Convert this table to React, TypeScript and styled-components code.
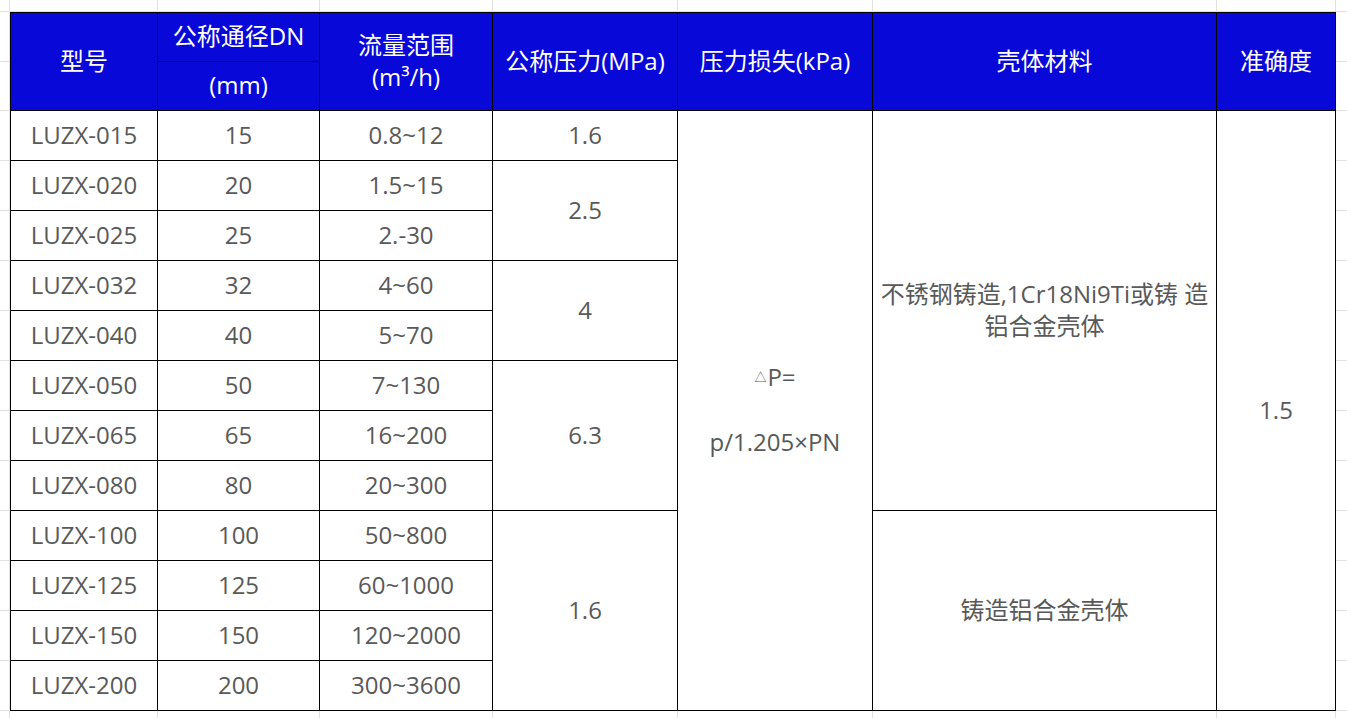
import React from "react";
import styled, { createGlobalStyle, css } from "styled-components";

const GlobalStyle = createGlobalStyle`
  html, body { margin: 0; padding: 0; background: #ffffff; overflow: hidden; }
  * { box-sizing: border-box; }
`;

const LINE = "#000000";
const GRID = "#e1e1e1";
const HEAD_BG = "#0808d8";
const TEXT = "#595959";

const Sheet = styled.div`
  display: grid;
  width: 1347px;
  height: 718px;
  grid-template-columns: 10px 148px 162px 173px 185px 195px 344px 119px 1fr;
  grid-template-rows: 12px 50px 49px repeat(12, 50px) 1fr;
  font-family: "Open Sans", "Noto Sans CJK SC", sans-serif;
`;

const GridCell = styled.div<{ $c: number; $r: number; $right?: boolean; $bottom?: boolean }>`
  grid-column: ${(p) => p.$c};
  grid-row: ${(p) => p.$r};
  border-right: ${(p) => (p.$right ? `1px solid ${GRID}` : "none")};
  border-bottom: ${(p) => (p.$bottom ? `1px solid ${GRID}` : "none")};
`;

const Cell = styled.div<{
  $c: number;
  $r: number;
  $cs?: number;
  $rs?: number;
  $head?: boolean;
  $left?: boolean;
  $top?: boolean;
}>`
  grid-column: ${(p) => p.$c} / span ${(p) => p.$cs ?? 1};
  grid-row: ${(p) => p.$r} / span ${(p) => p.$rs ?? 1};
  display: flex;
  align-items: center;
  justify-content: center;
  text-align: center;
  padding-bottom: 2px;
  border-right: 1px solid ${LINE};
  border-bottom: 1px solid ${LINE};
  ${(p) => p.$left && css`border-left: 1px solid ${LINE};`}
  ${(p) => p.$top && css`border-top: 1px solid ${LINE};`}
  background: ${(p) => (p.$head ? HEAD_BG : "#ffffff")};
  color: ${(p) => (p.$head ? "#ffffff" : TEXT)};
  font-size: 24px;
  line-height: 32px;
  white-space: nowrap;
`;

const Lines = styled.div`
  display: flex;
  flex-direction: column;
  align-items: center;
  line-height: 32px;
`;

const Blank = styled.div`
  height: 32px;
`;

const Tri = styled.span`
  font-size: 12px;
  vertical-align: 4px;
  margin-right: 1px;
`;

const rows: [string, string, string][] = [
  ["LUZX-015", "15", "0.8~12"],
  ["LUZX-020", "20", "1.5~15"],
  ["LUZX-025", "25", "2.-30"],
  ["LUZX-032", "32", "4~60"],
  ["LUZX-040", "40", "5~70"],
  ["LUZX-050", "50", "7~130"],
  ["LUZX-065", "65", "16~200"],
  ["LUZX-080", "80", "20~300"],
  ["LUZX-100", "100", "50~800"],
  ["LUZX-125", "125", "60~1000"],
  ["LUZX-150", "150", "120~2000"],
  ["LUZX-200", "200", "300~3600"],
];

const pressure = [
  { v: "1.6", start: 0, span: 1 },
  { v: "2.5", start: 1, span: 2 },
  { v: "4", start: 3, span: 2 },
  { v: "6.3", start: 5, span: 3 },
  { v: "1.6", start: 8, span: 4 },
];

const DATA_ROW = 4; // first data grid row

export default function App() {
  const margins: React.ReactNode[] = [];
  for (let c = 1; c <= 9; c++) {
    margins.push(<GridCell key={`t${c}`} $c={c} $r={1} $right={c < 9} $bottom />);
    margins.push(<GridCell key={`b${c}`} $c={c} $r={16} $right={c < 9} />);
  }
  for (let r = 2; r <= 15; r++) {
    margins.push(<GridCell key={`l${r}`} $c={1} $r={r} $right $bottom />);
    margins.push(<GridCell key={`r${r}`} $c={9} $r={r} $bottom />);
  }

  return (
    <>
      <GlobalStyle />
      <Sheet>
        {margins}

        <Cell $c={2} $r={2} $rs={2} $head $left $top>型号</Cell>
        <Cell $c={3} $r={2} $head $top>公称通径DN</Cell>
        <Cell $c={3} $r={3} $head>(mm)</Cell>
        <Cell $c={4} $r={2} $rs={2} $head $top>
          <Lines>
            <span>流量范围</span>
            <span>(m³/h)</span>
          </Lines>
        </Cell>
        <Cell $c={5} $r={2} $rs={2} $head $top>公称压力(MPa)</Cell>
        <Cell $c={6} $r={2} $rs={2} $head $top>压力损失(kPa)</Cell>
        <Cell $c={7} $r={2} $rs={2} $head $top>壳体材料</Cell>
        <Cell $c={8} $r={2} $rs={2} $head $top>准确度</Cell>

        {rows.map((row, i) => (
          <React.Fragment key={row[0]}>
            <Cell $c={2} $r={DATA_ROW + i} $left>{row[0]}</Cell>
            <Cell $c={3} $r={DATA_ROW + i}>{row[1]}</Cell>
            <Cell $c={4} $r={DATA_ROW + i}>{row[2]}</Cell>
          </React.Fragment>
        ))}

        {pressure.map((p) => (
          <Cell key={p.start} $c={5} $r={DATA_ROW + p.start} $rs={p.span}>
            {p.v}
          </Cell>
        ))}

        <Cell $c={6} $r={DATA_ROW} $rs={12}>
          <Lines>
            <span>
              <Tri>△</Tri>P=
            </span>
            <Blank />
            <span>p/1.205×PN</span>
          </Lines>
        </Cell>

        <Cell $c={7} $r={DATA_ROW} $rs={8}>
          <Lines>
            <span>不锈钢铸造,1Cr18Ni9Ti或铸 造</span>
            <span>铝合金壳体</span>
          </Lines>
        </Cell>
        <Cell $c={7} $r={DATA_ROW + 8} $rs={4}>铸造铝合金壳体</Cell>

        <Cell $c={8} $r={DATA_ROW} $rs={12}>1.5</Cell>
      </Sheet>
    </>
  );
}
